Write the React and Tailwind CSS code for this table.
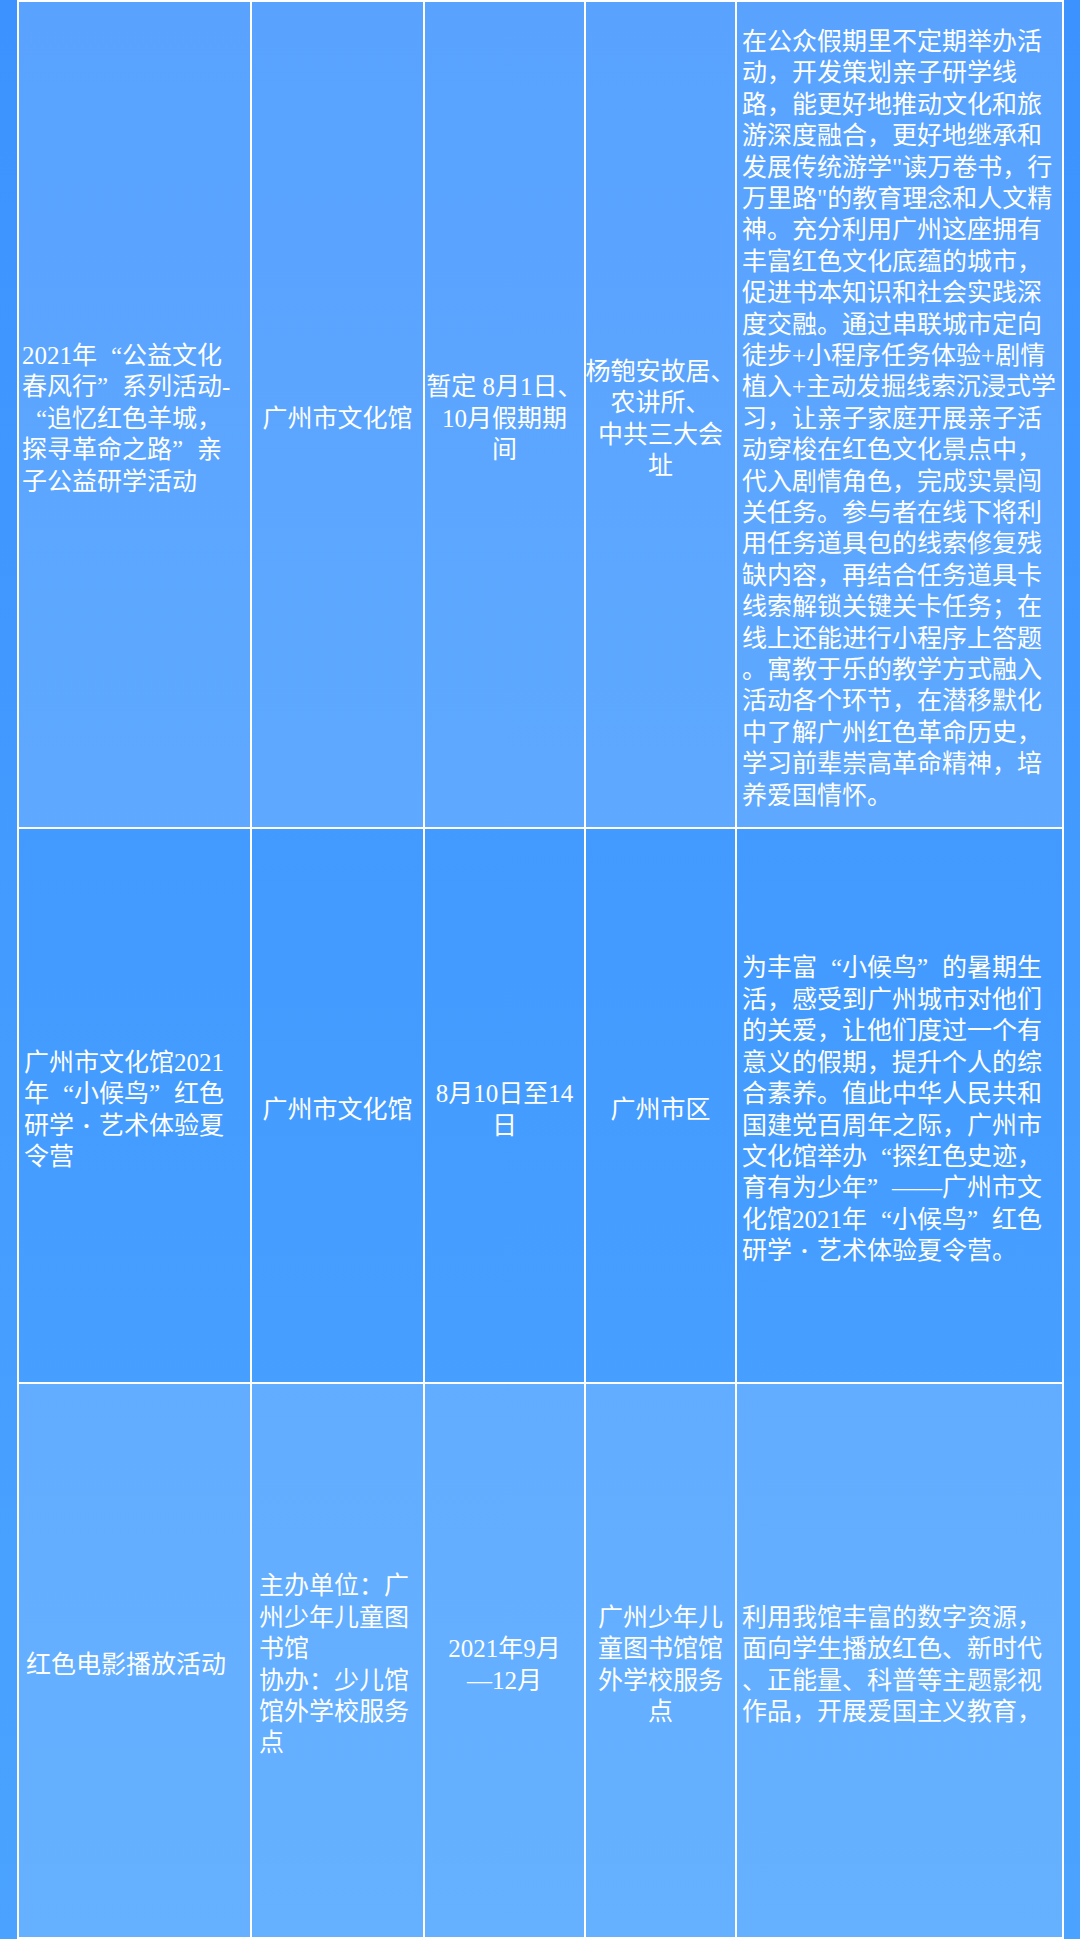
const font = {
  fontFamily: '"Liberation Serif", "Noto Sans CJK SC", serif',
};

const rows = [
  {
    tint: true,
    h: "h-[827px]",
    cells: [
      {
        align: "left",
        pad: "pl-[3px]",
        lines: [
          "2021年“公益文化",
          "春风行”系列活动-",
          "“追忆红色羊城，",
          "探寻革命之路”亲",
          "子公益研学活动",
        ],
      },
      { align: "center", lines: ["广州市文化馆"] },
      { align: "center", lines: ["暂定 8月1日、", "10月假期期", "间"] },
      { align: "center", lines: ["杨匏安故居、", "农讲所、", "中共三大会", "址"] },
      {
        align: "left",
        pad: "pl-[5px]",
        lines: [
          "在公众假期里不定期举办活",
          "动，开发策划亲子研学线",
          "路，能更好地推动文化和旅",
          "游深度融合，更好地继承和",
          "发展传统游学\"读万卷书，行",
          "万里路\"的教育理念和人文精",
          "神。充分利用广州这座拥有",
          "丰富红色文化底蕴的城市，",
          "促进书本知识和社会实践深",
          "度交融。通过串联城市定向",
          "徒步+小程序任务体验+剧情",
          "植入+主动发掘线索沉浸式学",
          "习，让亲子家庭开展亲子活",
          "动穿梭在红色文化景点中，",
          "代入剧情角色，完成实景闯",
          "关任务。参与者在线下将利",
          "用任务道具包的线索修复残",
          "缺内容，再结合任务道具卡",
          "线索解锁关键关卡任务；在",
          "线上还能进行小程序上答题",
          "。寓教于乐的教学方式融入",
          "活动各个环节，在潜移默化",
          "中了解广州红色革命历史，",
          "学习前辈崇高革命精神，培",
          "养爱国情怀。",
        ],
      },
    ],
  },
  {
    tint: false,
    h: "h-[555px]",
    cells: [
      {
        align: "left",
        pad: "pl-[5px]",
        lines: ["广州市文化馆2021", "年“小候鸟”红色", "研学·艺术体验夏", "令营"],
      },
      { align: "center", lines: ["广州市文化馆"] },
      { align: "center", lines: ["8月10日至14", "日"] },
      { align: "center", lines: ["广州市区"] },
      {
        align: "left",
        pad: "pl-[5px]",
        lines: [
          "为丰富“小候鸟”的暑期生",
          "活，感受到广州城市对他们",
          "的关爱，让他们度过一个有",
          "意义的假期，提升个人的综",
          "合素养。值此中华人民共和",
          "国建党百周年之际，广州市",
          "文化馆举办“探红色史迹，",
          "育有为少年”——广州市文",
          "化馆2021年“小候鸟”红色",
          "研学·艺术体验夏令营。",
        ],
      },
    ],
  },
  {
    tint: true,
    h: "h-[555px]",
    cells: [
      { align: "left", pad: "pl-[7px]", lines: ["红色电影播放活动"] },
      {
        align: "left",
        pad: "pl-[7px]",
        lines: ["主办单位：广", "州少年儿童图", "书馆", "协办：少儿馆", "馆外学校服务", "点"],
      },
      { align: "center", lines: ["2021年9月", "—12月"] },
      { align: "center", lines: ["广州少年儿", "童图书馆馆", "外学校服务", "点"] },
      {
        align: "left",
        pad: "pl-[5px]",
        lines: [
          "利用我馆丰富的数字资源，",
          "面向学生播放红色、新时代",
          "、正能量、科普等主题影视",
          "作品，开展爱国主义教育，",
        ],
      },
    ],
  },
];

// full-width quotes and middle dot, the way the song-style font sets them
function Line({ text }) {
  const parts = text.split(/([“”·])/);
  return (
    <div className="whitespace-nowrap">
      {parts.map((p, i) => {
        if (p === "“") return <span key={i} className="inline-block w-[25px] text-right">“</span>;
        if (p === "”") return <span key={i} className="inline-block w-[25px] text-left">”</span>;
        if (p === "·") return <span key={i} className="inline-block w-[25px] text-center font-bold">·</span>;
        return p;
      })}
    </div>
  );
}

function Cell({ cell, tint }) {
  return (
    <div
      className={`flex flex-col justify-center border-r-2 border-b-2 border-white pt-[8px] ${
        tint ? "bg-white/15" : ""
      } ${cell.align === "center" ? "items-center text-center" : "items-start"} ${cell.pad || ""}`}
    >
      {cell.lines.map((l, i) => (
        <Line key={i} text={l} />
      ))}
    </div>
  );
}

export default function App() {
  return (
    <div
      className="min-h-[1939px] w-[1080px] bg-gradient-to-b from-[#3c93ff] to-[#4ba3ff] pl-[17px] text-white"
      style={font}
    >
      <div className="w-[1047px] border-t-2 border-l-2 border-white text-[25px] leading-[31.4px]">
        {rows.map((row, r) => (
          <div key={r} className={`grid grid-cols-[233px_173px_161px_151px_327px] ${row.h}`}>
            {row.cells.map((c, i) => (
              <Cell key={i} cell={c} tint={row.tint} />
            ))}
          </div>
        ))}
      </div>
    </div>
  );
}
